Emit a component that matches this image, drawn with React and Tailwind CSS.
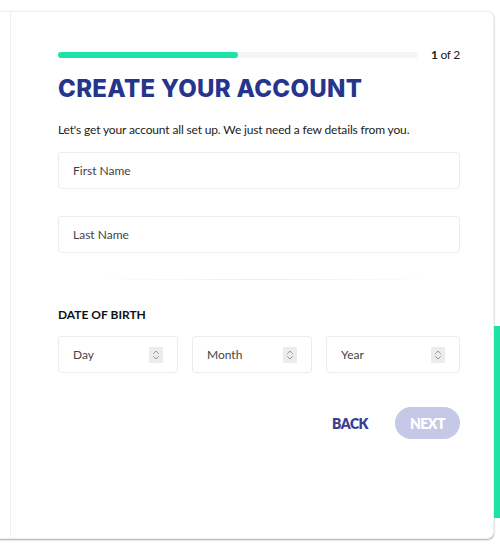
import { useState } from 'react';

function Spinner() {
  return (
    <span className="flex h-[16px] w-[14px] flex-col items-center justify-center bg-[#ececec]">
      <svg width="8" height="12" viewBox="0 0 8 12" fill="none" stroke="#9a9a9a" strokeWidth="1" strokeLinecap="round" strokeLinejoin="round">
        <path d="M1.5 4.5 L4 2 L6.5 4.5" />
        <path d="M1.5 7.5 L4 10 L6.5 7.5" />
      </svg>
    </span>
  );
}

function DateSelect({ label, width }) {
  return (
    <div className={`flex h-[37px] items-center justify-between rounded-[3px] border border-[#ececec] bg-white pl-[14px] pr-[14px] text-[12px] text-[#444] ${width}`}>
      <span>{label}</span>
      <Spinner />
    </div>
  );
}

export default function App() {
  const [first, setFirst] = useState('');
  const [last, setLast] = useState('');

  return (
    <div className="relative h-[546px] w-[500px] overflow-hidden bg-white font-['Lato','Open_Sans',sans-serif]">
      {/* green edge tab */}
      <div className="absolute right-0 top-[326px] h-[192px] w-[6px] bg-[#1de2a6]" />

      <div className="-ml-[10px] mt-[11px] h-[528px] w-[504px] rounded-r-[7px] border border-[#f0f0f0] bg-white shadow-[0_1px_2px_rgba(0,0,0,0.35)]">
        <div className="ml-[19px] h-full border-l border-[#f0f0f0] pl-[47px] pr-[33px] pt-[35px]">
          {/* progress */}
          <div className="flex items-center">
            <div className="h-[6px] w-[360px] shrink-0 rounded-full bg-[#f4f4f4]">
              <div className="h-[6px] w-[180px] rounded-full bg-[#1de2a6]" />
            </div>
            <div className="ml-[13px] shrink-0 whitespace-nowrap text-[12px] leading-[16px] tracking-[-0.3px] text-[#222]">
              <span className="font-bold">1</span> of 2
            </div>
          </div>

          <h1 className="mt-[11px] font-['Inter',sans-serif] text-[24px] font-extrabold leading-[30px] tracking-[0.3px] text-[#26358c]">
            CREATE YOUR ACCOUNT
          </h1>

          <p className="mt-[18px] text-[12px] leading-[16px] tracking-[-0.15px] text-[#222]">
            Let's get your account all set up. We just need a few details from you.
          </p>

          <input
            value={first}
            onChange={e => setFirst(e.target.value)}
            placeholder="First Name"
            className="mt-[14px] block h-[37px] w-[402px] rounded-[3px] border border-[#ececec] px-[14px] text-[12px] text-[#444] outline-none placeholder:text-[#444]"
          />
          <input
            value={last}
            onChange={e => setLast(e.target.value)}
            placeholder="Last Name"
            className="mt-[27px] block h-[37px] w-[402px] rounded-[3px] border border-[#ececec] px-[14px] text-[12px] text-[#444] outline-none placeholder:text-[#444]"
          />

          <div className="ml-[37px] mt-[26px] h-px w-[340px] bg-gradient-to-r from-transparent via-[#ececec] to-transparent" />

          <div className="mt-[26px] text-[12px] font-bold text-[#111]">DATE OF BIRTH</div>

          <div className="mt-[12px] flex gap-[14px]">
            <DateSelect label="Day" width="w-[120px]" />
            <DateSelect label="Month" width="w-[120px]" />
            <DateSelect label="Year" width="w-[134px]" />
          </div>

          <div className="mt-[34px] flex w-[402px] items-center justify-end gap-[27px]">
            <button className="text-[14px] font-extrabold tracking-[-0.5px] text-[#3a3f94]">BACK</button>
            <button className="h-[32px] w-[65px] rounded-full bg-[#c6c8e8] text-[14px] font-extrabold tracking-[-0.5px] text-white">
              NEXT
            </button>
          </div>
        </div>
      </div>
    </div>
  );
}
